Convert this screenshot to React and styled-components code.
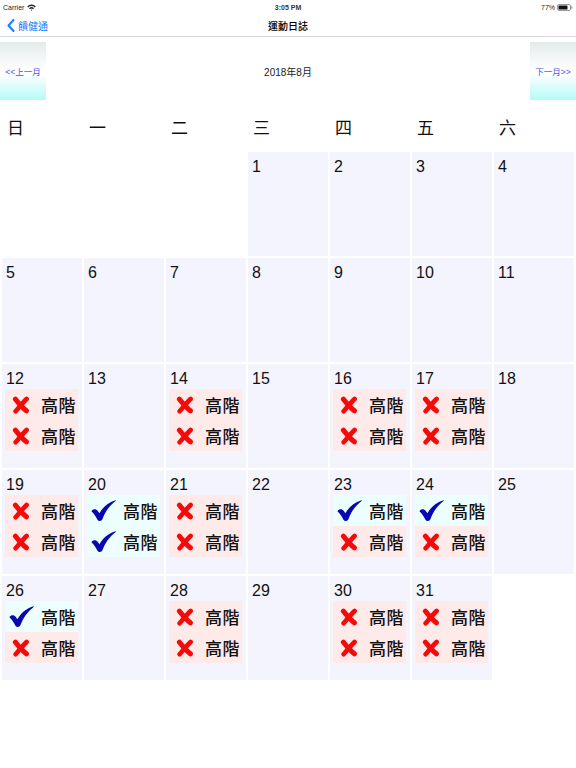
import React from 'react'
import styled, { createGlobalStyle } from 'styled-components'

const GlobalStyle = createGlobalStyle`
  body {
    margin: 0;
    background: #fff;
    font-family: 'Liberation Sans', 'Noto Sans CJK TC', sans-serif;
    color: #111;
  }
`

const Page = styled.div`
  width: 576px;
  min-height: 768px;
  background: #fff;
`

const StatusBar = styled.div`
  height: 15px;
  display: grid;
  grid-template-columns: 1fr auto 1fr;
  align-items: center;
  padding: 0 3px;
  font-size: 7px;
  color: #222;
`

const StatusLeft = styled.div`
  display: flex;
  align-items: center;
  gap: 3px;
`

const StatusTime = styled.div`
  font-weight: bold;
  color: #333;
`

const StatusRight = styled.div`
  display: flex;
  align-items: center;
  justify-content: flex-end;
  gap: 2px;
`

const NavBar = styled.div`
  height: 21px;
  display: grid;
  grid-template-columns: 1fr auto 1fr;
  align-items: center;
  border-bottom: 1px solid #d8d8d8;
`

const BackButton = styled.div`
  display: flex;
  align-items: center;
  gap: 3px;
  padding-left: 7px;
  color: #157efb;
  font-size: 10px;
`

const NavTitle = styled.div`
  font-size: 10px;
  font-weight: 500;
  font-family: 'Noto Sans CJK TC', sans-serif;
  color: #000;
`

const MonthBar = styled.div`
  margin-top: 5px;
  height: 58px;
  display: flex;
  align-items: center;
  justify-content: space-between;
`

const MonthButton = styled.div`
  width: 46px;
  height: 58px;
  display: flex;
  align-items: center;
  justify-content: center;
  background: linear-gradient(#e3eaea 0%, #fafcfc 40%, #fff 55%, #b4fbf6 100%);
  color: #4f55e8;
  font-size: 8.5px;
`

const MonthTitle = styled.div`
  font-size: 10px;
  color: #222;
`

const WeekHeader = styled.div`
  height: 52px;
  display: grid;
  grid-template-columns: repeat(7, 1fr);
  gap: 2px;
  padding: 0 2px;
  align-items: center;
`

const WeekDay = styled.div`
  padding-left: 5px;
  font-size: 17px;
  font-family: 'Noto Sans CJK TC', sans-serif;
  color: #111;
`

const Grid = styled.div`
  display: grid;
  grid-template-columns: repeat(7, 1fr);
  grid-auto-rows: 104px;
  gap: 2px;
  padding: 0 2px;
`

const Cell = styled.div`
  background: ${p => (p.empty ? 'transparent' : '#f4f4fe')};
  padding-top: 5px;
`

const DayNum = styled.div`
  padding-left: 4px;
  font-size: 16px;
  line-height: 19px;
  color: #111;
`

const BadgeList = styled.div`
  margin: 1px 4px 0 3px;
`

const Badge = styled.div`
  height: 31px;
  display: flex;
  align-items: center;
  background: ${p => (p.done ? '#edfefe' : '#ffeaea')};
`

const IconBox = styled.div`
  width: 32px;
  display: flex;
  justify-content: center;
  align-items: center;
`

const BadgeText = styled.span`
  margin-left: 4px;
  font-size: 17px;
  font-family: 'Noto Sans CJK TC', sans-serif;
  font-weight: 500;
  color: #111;
  letter-spacing: 0.5px;
`

// brush-like X, two thick strokes
const Cross = () => (
  <svg width="18" height="18" viewBox="0 0 18 18">
    <path d="M3.4 3.2 C6 6.2 9.5 10.8 14.4 14.8" fill="none" stroke="#f50a0a" strokeWidth="5" strokeLinecap="round" />
    <path d="M14.6 3 C11.2 6.4 7.6 10.6 3.6 15.2" fill="none" stroke="#f50a0a" strokeWidth="4.6" strokeLinecap="round" />
  </svg>
)

const Check = () => (
  <svg width="25" height="21" viewBox="0 0 25 21">
    <path d="M0.4 11.2 C2.2 8.6 5.2 8.8 6.8 11 L8.4 13.2 C11.6 7.6 16.6 2.8 24.4 0.2 C24.8 0.1 25 0.6 24.6 0.9 C18.6 5.4 14.2 11.6 11.4 19.2 C11 20.4 10 20.9 8.8 20.9 C7.6 20.9 6.8 20.3 6.3 19.4 C4.8 16.2 2.8 13.4 0.4 11.2 Z" fill="#0808b0" />
  </svg>
)

const Chevron = () => (
  <svg width="8" height="13" viewBox="0 0 8 13">
    <polyline points="6.5,1 1.5,6.5 6.5,12" fill="none" stroke="#157efb" strokeWidth="2" strokeLinecap="round" strokeLinejoin="round" />
  </svg>
)

const Wifi = () => (
  <svg width="9" height="7" viewBox="0 0 9 7">
    <path d="M0.2 2.4 A6 6 0 0 1 8.8 2.4 L7.8 3.4 A4.6 4.6 0 0 0 1.2 3.4 Z" fill="#222" />
    <path d="M2 4.2 A3.5 3.5 0 0 1 7 4.2 L6 5.2 A2.1 2.1 0 0 0 3 5.2 Z" fill="#222" />
    <path d="M3.7 5.9 A1.1 1.1 0 0 1 5.3 5.9 L4.5 6.8 Z" fill="#222" />
  </svg>
)

const Battery = () => (
  <svg width="16" height="7" viewBox="0 0 16 7">
    <rect x="0.5" y="0.5" width="13" height="6" rx="1.5" fill="none" stroke="#999" />
    <rect x="1.5" y="1.5" width="9" height="4" rx="0.5" fill="#111" />
    <rect x="14.2" y="2.3" width="1.2" height="2.4" rx="0.5" fill="#999" />
  </svg>
)

const weekDays = ['日', '一', '二', '三', '四', '五', '六']

const X = false
const V = true
const records = {
  12: [X, X],
  14: [X, X],
  16: [X, X],
  17: [X, X],
  19: [X, X],
  20: [V, V],
  21: [X, X],
  23: [V, X],
  24: [V, X],
  26: [V, X],
  28: [X, X],
  30: [X, X],
  31: [X, X]
}

// August 2018 starts on a Wednesday
const firstWeekday = 3
const daysInMonth = 31

const buildCells = () => {
  const cells = []
  for (let i = 0; i < firstWeekday; i++) cells.push(null)
  for (let d = 1; d <= daysInMonth; d++) cells.push(d)
  return cells
}

const App = () => {
  const cells = buildCells()
  return (
    <Page>
      <GlobalStyle />
      <StatusBar>
        <StatusLeft>
          <span>Carrier</span>
          <Wifi />
        </StatusLeft>
        <StatusTime>3:05 PM</StatusTime>
        <StatusRight>
          <span>77%</span>
          <Battery />
        </StatusRight>
      </StatusBar>

      <NavBar>
        <BackButton>
          <Chevron />
          <span>饋健通</span>
        </BackButton>
        <NavTitle>運動日誌</NavTitle>
        <div />
      </NavBar>

      <MonthBar>
        <MonthButton>&lt;&lt;上一月</MonthButton>
        <MonthTitle>2018年8月</MonthTitle>
        <MonthButton>下一月&gt;&gt;</MonthButton>
      </MonthBar>

      <WeekHeader>
        {weekDays.map(w => <WeekDay key={w}>{w}</WeekDay>)}
      </WeekHeader>

      <Grid>
        {cells.map((day, i) => (
          day === null ? (
            <Cell key={'e' + i} empty />
          ) : (
            <Cell key={day}>
              <DayNum>{day}</DayNum>
              {records[day] && (
                <BadgeList>
                  {records[day].map((done, j) => (
                    <Badge key={j} done={done}>
                      <IconBox>{done ? <Check /> : <Cross />}</IconBox>
                      <BadgeText>高階</BadgeText>
                    </Badge>
                  ))}
                </BadgeList>
              )}
            </Cell>
          )
        ))}
      </Grid>
    </Page>
  )
}

export default App
